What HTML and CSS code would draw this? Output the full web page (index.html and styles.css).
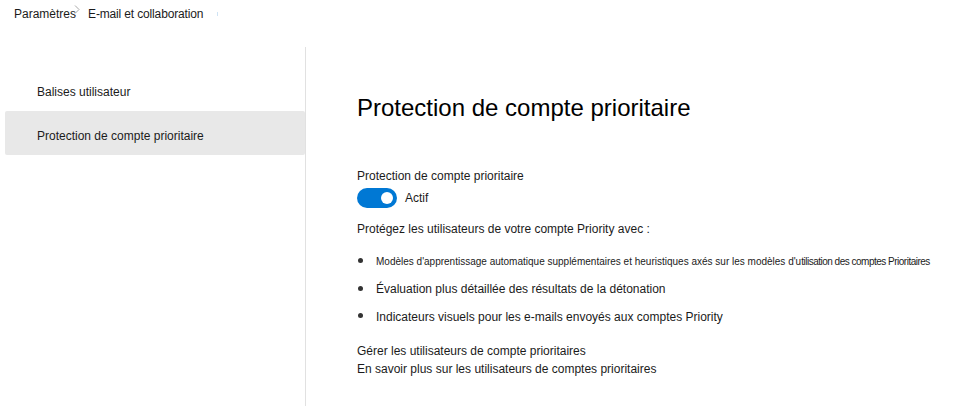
FILE: index.html
```html
<!DOCTYPE html>
<html lang="fr">
<head>
<meta charset="utf-8">
<title>Protection de compte prioritaire</title>
<link rel="stylesheet" href="styles.css">
</head>
<body>
<div class="page">
  <header class="breadcrumb">
    <span class="crumb">Paramètres</span>
    <svg class="chev" width="6" height="9" viewBox="0 0 6 9" aria-hidden="true"><path d="M1 0.5 L5 4.5 L1 8.5" fill="none" stroke="#a8a8a8" stroke-width="1"/></svg>
    <span class="crumb current">E-mail et collaboration</span>
    <span class="tick"></span>
  </header>
  <div class="main">
    <nav class="sidebar">
      <div class="nav-item">Balises utilisateur</div>
      <div class="nav-item selected">Protection de compte prioritaire</div>
    </nav>
    <section class="content">
      <h1 class="title">Protection de compte prioritaire</h1>
      <div class="field-label">Protection de compte prioritaire</div>
      <div class="toggle-row">
        <span class="toggle"><span class="knob"></span></span>
        <span class="toggle-text">Actif</span>
      </div>
      <p class="intro">Protégez les utilisateurs de votre compte Priority avec :</p>
      <ul class="features">
        <li class="small">Modèles d'apprentissage automatique supplémentaires et heuristiques axés sur les modèles d'u<span class="squeeze">tilisation des comptes Prioritaires</span></li>
        <li>Évaluation plus détaillée des résultats de la détonation</li>
        <li>Indicateurs visuels pour les e-mails envoyés aux comptes Priority</li>
      </ul>
      <div class="links">
        <a class="link">Gérer les utilisateurs de compte prioritaires</a>
        <a class="link">En savoir plus sur les utilisateurs de comptes prioritaires</a>
      </div>
    </section>
  </div>
</div>
</body>
</html>
```

FILE: styles.css
```css
html, body {
  margin: 0;
  padding: 0;
  background: #ffffff;
}
body {
  font-family: "Liberation Sans", Arial, sans-serif;
  font-size: 12px;
  color: #1b1b1b;
}
.page {
  height: 406px;
  display: flex;
  flex-direction: column;
}
.breadcrumb {
  height: 47px;
  box-sizing: border-box;
  padding: 6px 0 0 14px;
  display: flex;
  align-items: flex-start;
  line-height: 16px;
}
.crumb {
  color: #1b1b1b;
}
.chev {
  margin: -1px 0 0 -2px;
}
.current {
  margin-left: 8px;
  letter-spacing: -0.15px;
}
.tick {
  width: 1px;
  height: 4px;
  background: #cfe3f4;
  margin: 6px 0 0 14px;
}
.main {
  flex: 1;
  display: flex;
}
.sidebar {
  width: 300px;
  padding: 20px 0 0 5px;
  border-right: 1px solid #e1e1e1;
  display: flex;
  flex-direction: column;
}
.nav-item {
  height: 44px;
  box-sizing: border-box;
  padding: 6px 0 0 32px;
  display: flex;
  align-items: center;
  line-height: 16px;
  color: #1b1b1b;
}
.nav-item.selected {
  background: #e8e8e8;
  border-radius: 2px;
}
.content {
  flex: 1;
  padding: 45px 0 0 51px;
}
.title {
  margin: 0;
  font-size: 24px;
  font-weight: normal;
  line-height: 32px;
  color: #000000;
}
.field-label {
  margin-top: 44px;
  line-height: 16px;
}
.toggle-row {
  margin-top: 4px;
  display: flex;
  align-items: center;
  height: 20px;
}
.toggle {
  width: 40px;
  height: 20px;
  border-radius: 10px;
  background: #0078d4;
  display: flex;
  align-items: center;
  justify-content: flex-end;
  padding-right: 4px;
  box-sizing: border-box;
}
.knob {
  width: 12px;
  height: 12px;
  border-radius: 50%;
  background: #ffffff;
}
.toggle-text {
  margin-left: 8px;
  line-height: 16px;
}
.intro {
  margin: 13px 0 0;
  line-height: 16px;
}
.features {
  list-style: none;
  margin: 11px 0 0;
  padding: 0;
}
.features li {
  height: 27.5px;
  display: flex;
  align-items: center;
  padding-left: 19px;
  position: relative;
}
.features li::before {
  content: "";
  position: absolute;
  left: 1px;
  top: 10px;
  width: 5px;
  height: 5px;
  border-radius: 50%;
  background: #333333;
}
.features li.small {
  font-size: 10px;
}
.squeeze {
  letter-spacing: -0.5px;
}
.links {
  margin-top: 11px;
  display: flex;
  flex-direction: column;
}
.link {
  line-height: 18px;
  color: #1b1b1b;
}
```
